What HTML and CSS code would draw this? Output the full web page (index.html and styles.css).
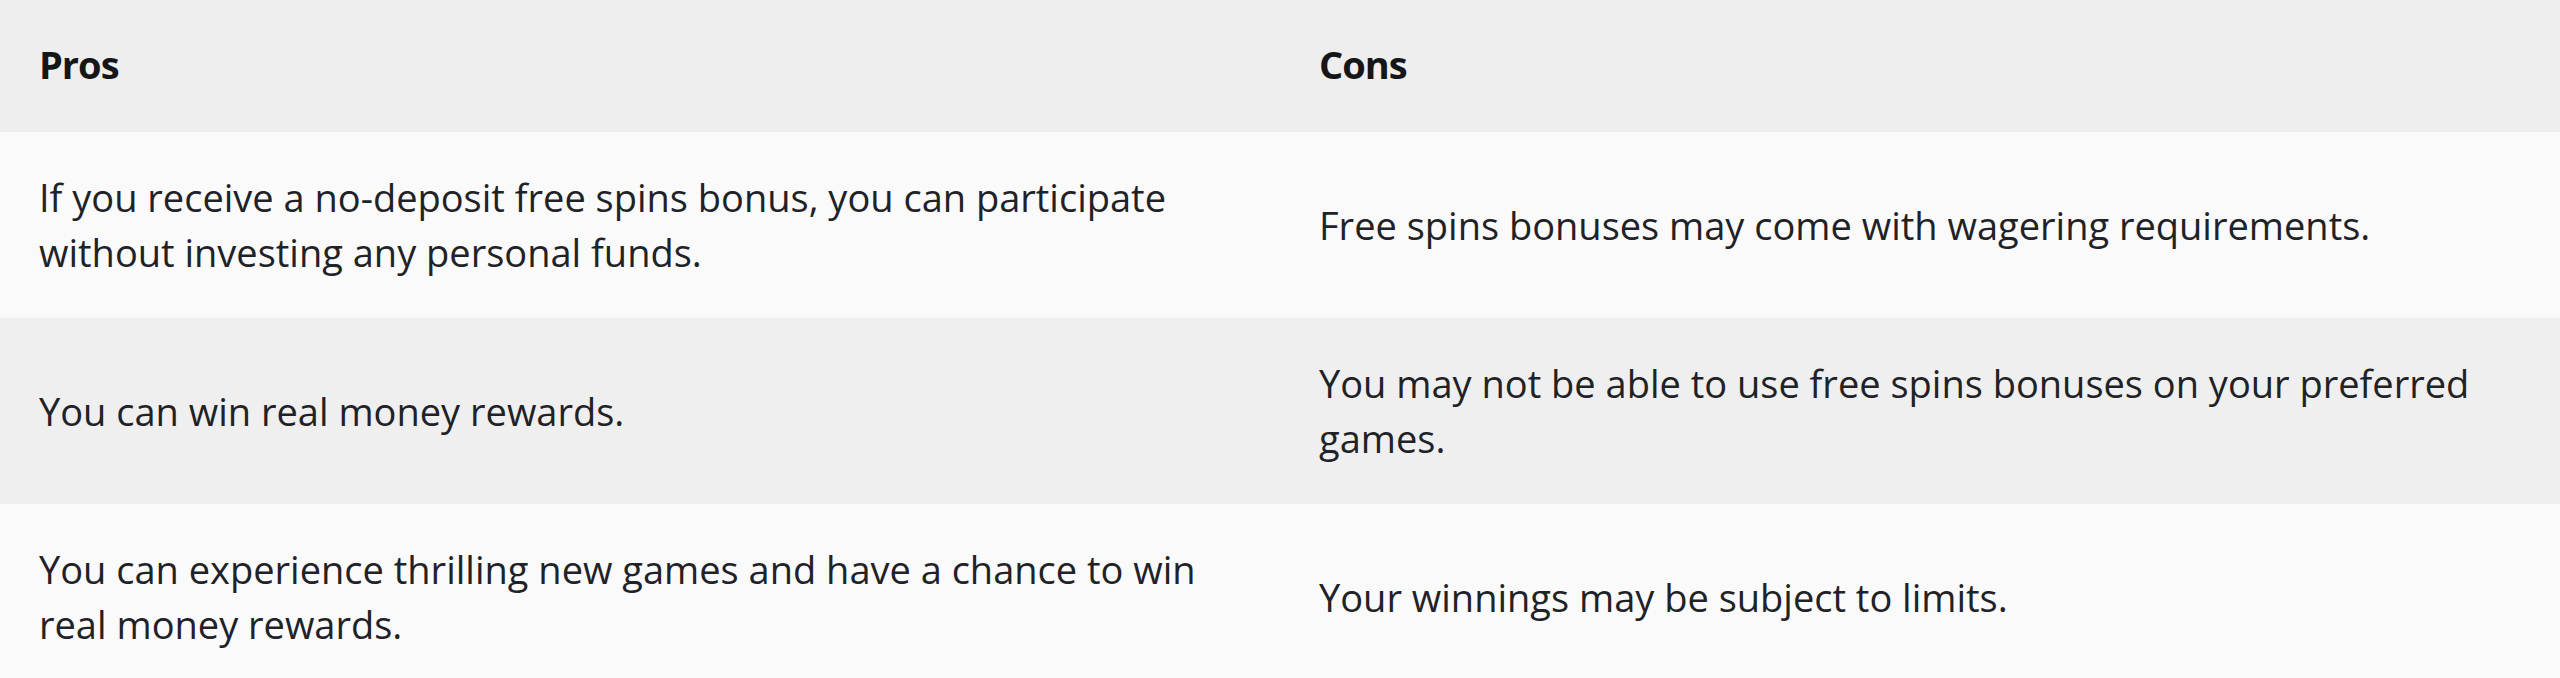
FILE: index.html
```html
<!DOCTYPE html>
<html lang="en">
<head>
<meta charset="utf-8">
<title>Pros and Cons</title>
<link rel="stylesheet" href="styles.css">
</head>
<body>
<table class="pc-table">
  <colgroup>
    <col class="col-half">
    <col class="col-half">
  </colgroup>
  <thead>
    <tr class="row-head">
      <th class="cell">Pros</th>
      <th class="cell">Cons</th>
    </tr>
  </thead>
  <tbody>
    <tr class="row-light">
      <td class="cell">If you receive a no-deposit free spins bonus, you can participate without investing any personal funds.</td>
      <td class="cell">Free spins bonuses may come with wagering requirements.</td>
    </tr>
    <tr class="row-dark">
      <td class="cell">You can win real money rewards.</td>
      <td class="cell">You may not be able to use free spins bonuses on your preferred games.</td>
    </tr>
    <tr class="row-light">
      <td class="cell">You can experience thrilling new games and have a chance to win real money rewards.</td>
      <td class="cell">Your winnings may be subject to limits.</td>
    </tr>
  </tbody>
</table>
</body>
</html>
```

FILE: styles.css
```css
html, body {
  margin: 0;
  padding: 0;
  background: #fafafa;
  overflow: hidden;
}

.pc-table {
  width: 2560px;
  border-collapse: collapse;
  table-layout: fixed;
  font-family: "Open Sans", "Noto Sans", sans-serif;
  font-size: 38px;
  line-height: 55px;
  color: #1f2226;
}

.col-half {
  width: 1280px;
}

.cell {
  box-sizing: border-box;
  padding: 38px 39px;
  text-align: left;
  vertical-align: middle;
  font-weight: 400;
}

th.cell {
  padding-top: 37px;
  padding-bottom: 40px;
  font-weight: 700;
  letter-spacing: -1px;
  color: #141618;
}

.row-head {
  background: #eeeeee;
}

.row-light {
  background: #fafafa;
}

.row-dark {
  background: #efefef;
}
```
